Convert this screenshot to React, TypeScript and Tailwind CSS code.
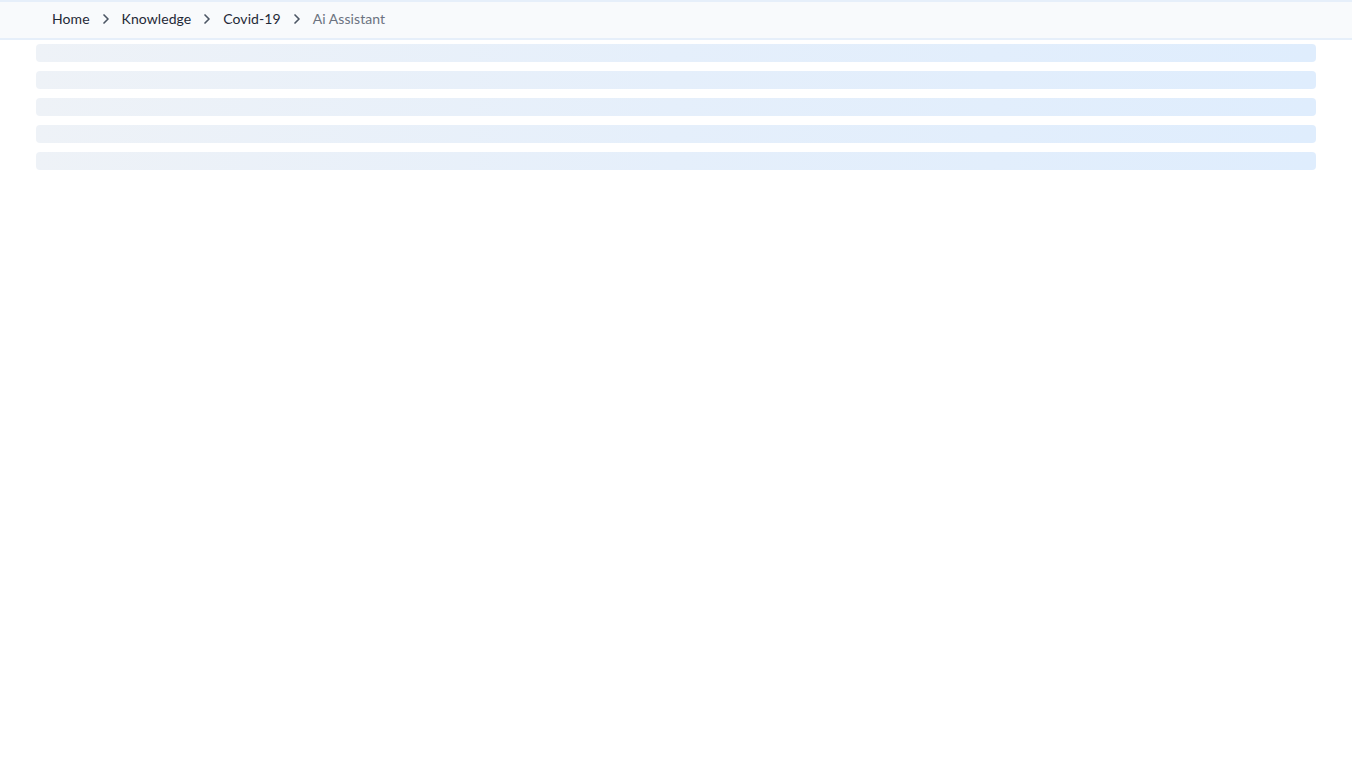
import React from "react"
import { ChevronRight } from "lucide-react"

const crumbs = ["Home", "Knowledge", "Covid-19"]

export default function App() {
  return (
    <div className="min-h-screen bg-white" style={{ fontFamily: "Lato, 'Noto Sans', sans-serif" }}>
      {/* Breadcrumb bar */}
      <div className="h-[40px] bg-[#f8fafc] border-y-2 border-[#e6effa] flex items-center pl-[52px] pb-[2px]">
        <nav className="flex items-center gap-2 text-sm tracking-[0.005em]">
          {crumbs.map((c) => (
            <React.Fragment key={c}>
              <span className="text-[#1f2937] cursor-pointer">{c}</span>
              <ChevronRight className="w-4 h-4 text-[#4b5563]" strokeWidth={2.5} />
            </React.Fragment>
          ))}
          <span className="text-[#6b7280]">Ai Assistant</span>
        </nav>
      </div>

      {/* Loading skeleton */}
      <div className="px-9 pt-1 flex flex-col gap-[9px]">
        {[0, 1, 2, 3, 4].map((i) => (
          <div
            key={i}
            className="h-[18px] rounded-[4px] bg-gradient-to-r from-[#eef2f7] via-[#e5effb] to-[#dfedfd]"
          />
        ))}
      </div>
    </div>
  )
}
